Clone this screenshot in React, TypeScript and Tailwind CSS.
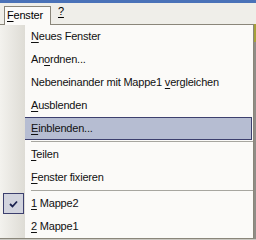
import { Fragment } from 'react'

type Item = { pre: string; key: string; post: string; checked?: boolean; active?: boolean }

const groups: Item[][] = [
  [
    { pre: '', key: 'N', post: 'eues Fenster' },
    { pre: 'An', key: 'o', post: 'rdnen...' },
    { pre: 'Nebeneinander mit Mappe1 ', key: 'v', post: 'ergleichen' },
    { pre: '', key: 'A', post: 'usblenden' },
    { pre: '', key: 'E', post: 'inblenden...', active: true },
  ],
  [
    { pre: '', key: 'T', post: 'eilen' },
    { pre: '', key: 'F', post: 'enster fixieren' },
  ],
  [
    { pre: '', key: '1', post: ' Mappe2', checked: true },
    { pre: '', key: '2', post: ' Mappe1' },
  ],
]

function MenuRow({ item }: { item: Item }) {
  return (
    <div className="relative flex h-[23px] items-center">
      {item.active && (
        <div className="absolute inset-y-0 left-[1px] right-[1px] border border-[#3c3f6e] bg-[#b6bdd2]" />
      )}
      <div className="relative flex h-full w-[25px] shrink-0 items-center justify-center bg-gradient-to-r from-[#f3f2ee] to-[#dedcd5]">
        {item.checked && (
          <div className="ml-[1px] flex h-[21px] w-[21px] items-center justify-center border border-[#3c3f6e] bg-[#d2d4de]">
            <svg width="9" height="8" viewBox="0 0 9 8">
              <path d="M1 4 L3.5 6.5 L8 1.5" stroke="#1c2350" strokeWidth="1.8" fill="none" />
            </svg>
          </div>
        )}
      </div>
      <div className="relative pl-[6px] text-[#111]">
        {item.pre}
        <span className="underline underline-offset-2">{item.key}</span>
        {item.post}
      </div>
    </div>
  )
}

export default function App() {
  return (
    <div className="relative h-[240px] w-[256px] overflow-hidden bg-[#c9c7c1] font-['Liberation_Sans',sans-serif] text-[11px] leading-none tracking-[-0.2px]">
      <div className="h-[3px] bg-[#4a72b8]" />
      <div className="flex h-[21px] items-end bg-[#efeee9] pl-[4px]">
        <div className="relative z-10 -mb-px flex h-[19px] w-[47px] items-center border border-b-0 border-[#8a867a] bg-[#fbfaf8] pl-[2px] pb-[1px]">
          <span className="underline underline-offset-2">F</span>enster
        </div>
        <div className="mb-[3px] ml-[7px] h-[15px]">
          <span className="underline underline-offset-2">?</span>
        </div>
      </div>
      <div className="flex">
        <div className="w-[254px] border border-l-0 border-[#8a867a] bg-[#fbfaf8]">
          {groups.map((g, i) => (
            <Fragment key={i}>
              {i > 0 && (
                <div className="flex h-[3px]">
                  <div className="w-[25px] bg-gradient-to-r from-[#f3f2ee] to-[#dedcd5]" />
                  <div className="mt-[1px] ml-[6px] h-px flex-1 bg-[#a7a6a0]" />
                </div>
              )}
              {g.map((item) => (
                <MenuRow key={item.pre + item.key} item={item} />
              ))}
            </Fragment>
          ))}
        </div>
        <div className="flex w-[2px] flex-col">
          <div className="h-[18px] bg-[#a4a13a]" />
          <div className="flex-1 bg-[#8f8d87]" />
        </div>
      </div>
    </div>
  )
}
